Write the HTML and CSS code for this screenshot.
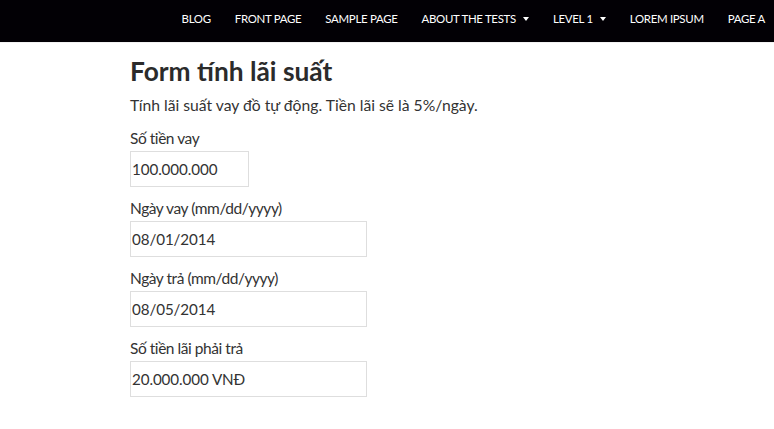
FILE: index.html
```html
<!DOCTYPE html>
<html lang="vi">
<head>
    <meta charset="UTF-8">
    <title>Form tính lãi suất</title>
    <link rel="stylesheet" href="styles.css">
</head>
<body>
    <nav class="topbar">
        <ul class="menu">
            <li>Blog</li>
            <li>Front Page</li>
            <li>Sample Page</li>
            <li class="has-sub">About The Tests</li>
            <li class="has-sub">Level 1</li>
            <li>Lorem Ipsum</li>
            <li>Page A</li>
        </ul>
    </nav>

    <div class="content">
        <h1>Form tính lãi suất</h1>
        <p class="intro">Tính lãi suất vay đồ tự động. Tiền lãi sẽ là 5%/ngày.</p>

        <div class="field">
            <label>Số tiền vay</label>
            <input type="text" class="short" value="100.000.000">
        </div>
        <div class="field">
            <label>Ngày vay (mm/dd/yyyy)</label>
            <input type="text" value="08/01/2014">
        </div>
        <div class="field">
            <label>Ngày trả (mm/dd/yyyy)</label>
            <input type="text" value="08/05/2014">
        </div>
        <div class="field">
            <label>Số tiền lãi phải trả</label>
            <input type="text" value="20.000.000 VNĐ">
        </div>
    </div>
</body>
</html>
```

FILE: styles.css
```css
body {
    margin: 0;
    font-family: Lato, "Open Sans", sans-serif;
    color: #333;
    background: #fff;
}

/* menu tren cung */
.topbar {
    background-color: #020005;
    height: 42px;
    display: flex;
    justify-content: flex-end;
    border-bottom: 1px solid #f2f2f2;
}
.menu {
    list-style: none;
    margin: 0;
    padding: 0 9px 0 0;
    display: flex;
    gap: 24px;
    align-items: center;
    height: 36px;
}
.menu li {
    color: #fff;
    font-size: 11.45px;
    text-transform: uppercase;
    letter-spacing: -0.3px;
}
.menu li.has-sub::after {
    content: "";
    display: inline-block;
    margin-left: 7px;
    vertical-align: 2px;
    border-left: 3.5px solid transparent;
    border-right: 3.5px solid transparent;
    border-top: 4px solid #fff;
}

.content {
    padding: 11px 0 0 130px;
}
h1 {
    margin: 0 0 6px;
    font-size: 26.3px;
    font-weight: bold;
    color: #2b2b2b;
    line-height: 34px;
}
.intro {
    margin: 0 0 11px;
    font-size: 15.7px;
    line-height: 22px;
}
.field {
    margin-bottom: 10px;
}
.field label {
    display: block;
    font-size: 15.5px;
    letter-spacing: -0.45px;
    line-height: 22px;
    margin-bottom: 2px;
}
.field input {
    display: block;
    box-sizing: border-box;
    width: 237px;
    height: 36px;
    padding: 0 2px 0 1px;
    margin: 0;
    font-family: Lato, "Open Sans", sans-serif;
    font-size: 15.2px;
    letter-spacing: -0.1px;
    color: #333;
    border: 1px solid #dedede;
    border-radius: 0;
    background: #fff;
}
.field input.short {
    width: 119px;
}
```
